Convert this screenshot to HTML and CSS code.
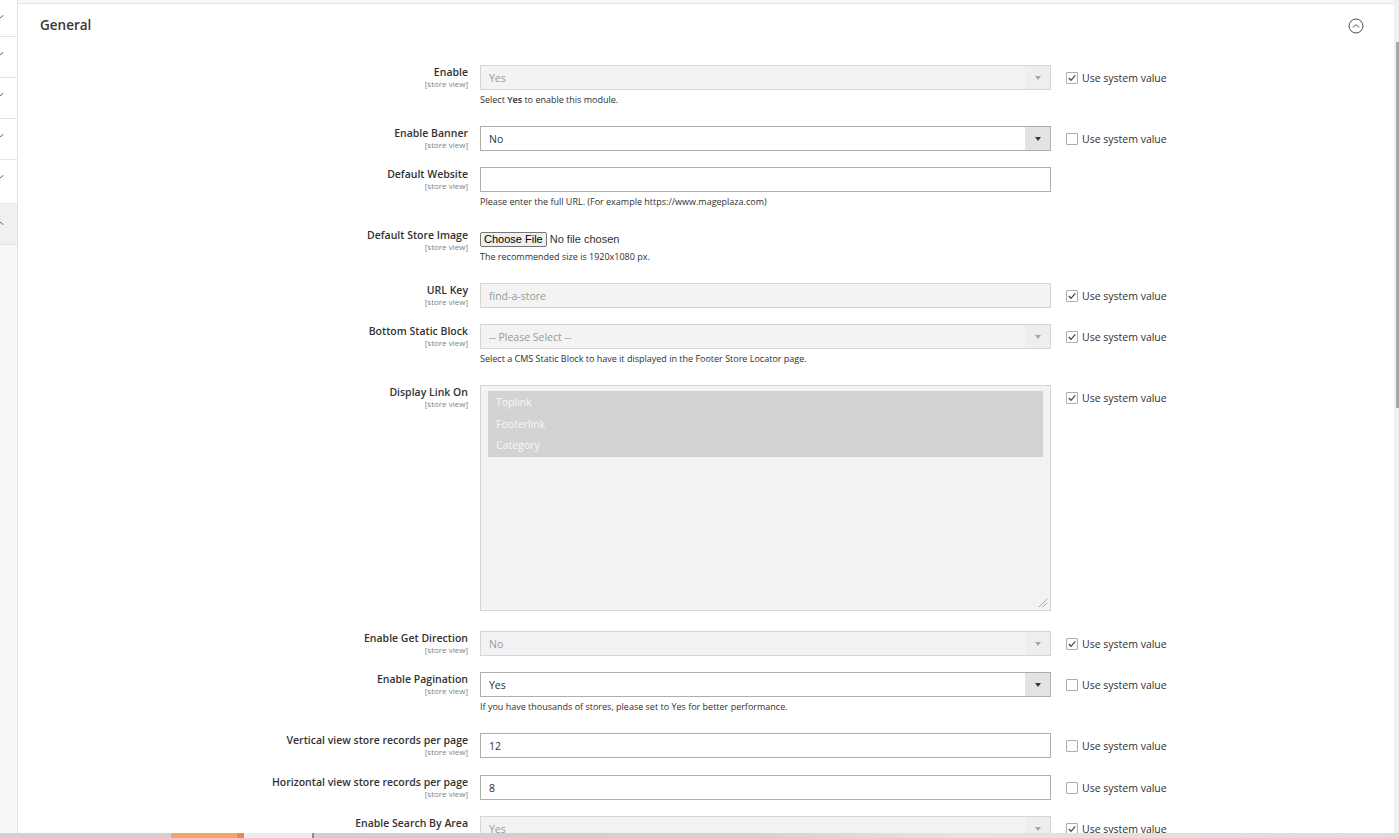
FILE: index.html
```html
<!DOCTYPE html>
<html lang="en">
  <head>
    <meta charset="UTF-8">
    <title>Store Locator - General</title>
    <link rel="stylesheet" href="styles.css">
  </head>
  <body>
    <div class="page">
      <!-- left tab list, scrolled out of view -->
      <aside class="sidebar">
        <div class="nav-item first"><svg class="chev" viewBox="0 0 8 5"><path d="M1 1 L4 4 L7 1"/></svg></div>
        <div class="nav-item"><svg class="chev" viewBox="0 0 8 5"><path d="M1 1 L4 4 L7 1"/></svg></div>
        <div class="nav-item"><svg class="chev" viewBox="0 0 8 5"><path d="M1 1 L4 4 L7 1"/></svg></div>
        <div class="nav-item"><svg class="chev" viewBox="0 0 8 5"><path d="M1 1 L4 4 L7 1"/></svg></div>
        <div class="nav-item tall"><svg class="chev" viewBox="0 0 8 5"><path d="M1 1 L4 4 L7 1"/></svg></div>
        <div class="nav-item active"><svg class="chev" viewBox="0 0 8 5"><path d="M1 4 L4 1 L7 4"/></svg></div>
      </aside>

      <main class="content">
        <div class="section-head">
          <h2>General</h2>
          <span class="collapse">
            <svg viewBox="0 0 16 16"><circle cx="8" cy="8" r="7"/><path d="M5 9.5 L8 6.5 L11 9.5"/></svg>
          </span>
        </div>

        <div class="form">
          <div class="field">
            <div class="label"><span class="label-text">Enable</span><span class="scope">[store view]</span></div>
            <div class="control">
              <div class="select disabled"><span>Yes</span><span class="arrow"></span></div>
              <div class="note">Select <b>Yes</b> to enable this module.</div>
            </div>
            <label class="use-default"><span class="checkbox checked"><svg viewBox="0 0 10 10"><path d="M1.8 5 L4 7.3 L8.3 2.3"/></svg></span>Use system value</label>
          </div>

          <div class="field">
            <div class="label"><span class="label-text">Enable Banner</span><span class="scope">[store view]</span></div>
            <div class="control">
              <div class="select"><span>No</span><span class="arrow"></span></div>
            </div>
            <label class="use-default"><span class="checkbox"></span>Use system value</label>
          </div>

          <div class="field">
            <div class="label"><span class="label-text">Default Website</span><span class="scope">[store view]</span></div>
            <div class="control">
              <input class="input" type="text" value="">
              <div class="note">Please enter the full URL. (For example https://www.mageplaza.com)</div>
            </div>
          </div>

          <div class="field">
            <div class="label"><span class="label-text">Default Store Image</span><span class="scope">[store view]</span></div>
            <div class="control">
              <div class="file-row"><span class="file-btn">Choose File</span><span class="file-name">No file chosen</span></div>
              <div class="note">The recommended size is 1920x1080 px.</div>
            </div>
          </div>

          <div class="field">
            <div class="label"><span class="label-text">URL Key</span><span class="scope">[store view]</span></div>
            <div class="control">
              <input class="input" type="text" value="find-a-store" disabled>
            </div>
            <label class="use-default"><span class="checkbox checked"><svg viewBox="0 0 10 10"><path d="M1.8 5 L4 7.3 L8.3 2.3"/></svg></span>Use system value</label>
          </div>

          <div class="field">
            <div class="label"><span class="label-text">Bottom Static Block</span><span class="scope">[store view]</span></div>
            <div class="control">
              <div class="select disabled"><span>-- Please Select --</span><span class="arrow"></span></div>
              <div class="note">Select a CMS Static Block to have it displayed in the Footer Store Locator page.</div>
            </div>
            <label class="use-default"><span class="checkbox checked"><svg viewBox="0 0 10 10"><path d="M1.8 5 L4 7.3 L8.3 2.3"/></svg></span>Use system value</label>
          </div>

          <div class="field tall-field">
            <div class="label"><span class="label-text">Display Link On</span><span class="scope">[store view]</span></div>
            <div class="control">
              <div class="multiselect">
                <div class="options">
                  <div class="option">Toplink</div>
                  <div class="option">Footerlink</div>
                  <div class="option">Category</div>
                </div>
                <svg class="grip" viewBox="0 0 12 12"><path d="M2 11 L11 2 M6 11 L11 6"/></svg>
              </div>
            </div>
            <label class="use-default"><span class="checkbox checked"><svg viewBox="0 0 10 10"><path d="M1.8 5 L4 7.3 L8.3 2.3"/></svg></span>Use system value</label>
          </div>

          <div class="field">
            <div class="label"><span class="label-text">Enable Get Direction</span><span class="scope">[store view]</span></div>
            <div class="control">
              <div class="select disabled"><span>No</span><span class="arrow"></span></div>
            </div>
            <label class="use-default"><span class="checkbox checked"><svg viewBox="0 0 10 10"><path d="M1.8 5 L4 7.3 L8.3 2.3"/></svg></span>Use system value</label>
          </div>

          <div class="field">
            <div class="label"><span class="label-text">Enable Pagination</span><span class="scope">[store view]</span></div>
            <div class="control">
              <div class="select"><span>Yes</span><span class="arrow"></span></div>
              <div class="note">If you have thousands of stores, please set to Yes for better performance.</div>
            </div>
            <label class="use-default"><span class="checkbox"></span>Use system value</label>
          </div>

          <div class="field spaced">
            <div class="label"><span class="label-text">Vertical view store records per page</span><span class="scope">[store view]</span></div>
            <div class="control">
              <input class="input" type="text" value="12">
            </div>
            <label class="use-default"><span class="checkbox"></span>Use system value</label>
          </div>

          <div class="field">
            <div class="label"><span class="label-text">Horizontal view store records per page</span><span class="scope">[store view]</span></div>
            <div class="control">
              <input class="input" type="text" value="8">
            </div>
            <label class="use-default"><span class="checkbox"></span>Use system value</label>
          </div>

          <div class="field">
            <div class="label"><span class="label-text">Enable Search By Area</span><span class="scope">[store view]</span></div>
            <div class="control">
              <div class="select disabled"><span>Yes</span><span class="arrow"></span></div>
            </div>
            <label class="use-default"><span class="checkbox checked"><svg viewBox="0 0 10 10"><path d="M1.8 5 L4 7.3 L8.3 2.3"/></svg></span>Use system value</label>
          </div>
        </div>
      </main>

      <div class="vscroll"><div class="thumb"></div></div>
    </div>

    <!-- strip of the window below, peeking in at the bottom -->
    <div class="bottom-strip">
      <span class="seg gray"></span>
      <span class="seg orange"></span>
      <span class="seg orange-dark"></span>
      <span class="seg light"></span>
      <span class="seg line"></span>
      <span class="seg rest"></span>
    </div>
  </body>
</html>
```

FILE: styles.css
```css
body {
  margin: 0;
  font-family: "Open Sans", "Noto Sans", sans-serif;
  color: #303030;
  background: #fff;
  height: 838px;
  overflow: hidden;
}

.page {
  display: flex;
  height: 838px;
}

/* left tabs */
.sidebar {
  width: 17px;
  flex: none;
  border-right: 1px solid #e3e3e3;
  background: #f8f8f8;
  overflow: hidden;
}

.nav-item {
  height: 40px;
  border-bottom: 1px solid #e3e3e3;
  background: #fff;
  position: relative;
}

.nav-item.first { height: 36px; }
.nav-item.tall { height: 43px; }
.nav-item.active { background: #f0f0f0; }

.chev {
  position: absolute;
  left: -3px;
  top: 14px;
  width: 7px;
  height: 5px;
  fill: none;
  stroke: #514943;
  stroke-width: 1.1;
}

.nav-item.active .chev { top: 17px; }

/* main area */
.content {
  flex: 1;
  border-top: 1px solid #e3e3e3;
  margin-top: 3px;
  box-shadow: 0 -3px 0 #f8f8f8;
}

.section-head {
  display: flex;
  justify-content: space-between;
  align-items: flex-start;
  padding: 11px 30px 0 22px;
  height: 21px;
}

.section-head h2 {
  margin: 0;
  font-size: 13.5px;
  line-height: 20px;
  font-weight: 600;
  color: #41362f;
}

.collapse {
  margin-top: 3px;
}

.collapse svg {
  display: block;
  width: 16px;
  height: 16px;
  fill: none;
  stroke: #514943;
  stroke-width: 1;
}

.form {
  padding-top: 29px;
}

.field {
  display: grid;
  grid-template-columns: 451px 570px auto;
  column-gap: 11px;
  align-items: start;
  margin-bottom: 16px;
}

.tall-field { margin-bottom: 20px; }
.field.spaced { margin-bottom: 17px; }

.label {
  text-align: right;
  padding-right: 1px;
}

.label-text {
  display: block;
  font-size: 10.5px;
  line-height: 14px;
  font-weight: 600;
  color: #333;
}

.scope {
  display: block;
  font-size: 8px;
  line-height: 10px;
  color: #808080;
}

.note {
  font-size: 9px;
  line-height: 12px;
  margin: 4px 0 4px;
  color: #303030;
}

.note b { font-weight: 600; }

/* inputs */
.input {
  display: block;
  box-sizing: border-box;
  width: 571px;
  height: 25px;
  margin: 0;
  padding: 0 8px;
  border: 1px solid #adadad;
  font-family: inherit;
  font-size: 10.5px;
  color: #303030;
  background: #fff;
  outline: none;
}

.input:disabled {
  background: #f3f3f3;
  border-color: #d6d6d6;
  color: #999;
}

.select {
  box-sizing: border-box;
  width: 571px;
  height: 25px;
  border: 1px solid #adadad;
  background: #fff;
  display: flex;
  align-items: center;
  justify-content: space-between;
  padding-left: 8px;
  font-size: 10.5px;
  color: #303030;
}

.select .arrow {
  width: 25px;
  height: 23px;
  background: #e3e3e3;
  position: relative;
}

.select .arrow::after {
  content: "";
  position: absolute;
  left: 10px;
  top: 10px;
  border-left: 3px solid transparent;
  border-right: 3px solid transparent;
  border-top: 4px solid #41362f;
}

.select.disabled {
  background: #f3f3f3;
  border-color: #d6d6d6;
  color: #999;
}

.select.disabled .arrow { background: #eeeeee; }
.select.disabled .arrow::after { border-top-color: #a6a6a6; }

/* file picker */
.file-row {
  height: 19px;
  padding-top: 4px;
  box-sizing: border-box;
  display: flex;
  align-items: flex-start;
  font-family: "Liberation Sans", Arial, sans-serif;
  font-size: 11px;
}

.file-btn {
  box-sizing: border-box;
  height: 15px;
  line-height: 13px;
  padding: 0 3px;
  border: 1px solid #767676;
  border-radius: 2px;
  background: #efefef;
  color: #000;
}

.file-name {
  margin-left: 3px;
  line-height: 15px;
  color: #303030;
}

/* multiselect */
.multiselect {
  position: relative;
  box-sizing: border-box;
  width: 571px;
  height: 226px;
  border: 1px solid #d6d6d6;
  background: #f3f3f3;
  padding: 5px 7px 0 7px;
}

.options {
  background: #d3d3d3;
  padding-top: 1px;
}

.option {
  padding-left: 8px;
  font-size: 10.5px;
  line-height: 21.5px;
  color: #f7f7f7;
}

.grip {
  position: absolute;
  right: 2px;
  bottom: 2px;
  width: 11px;
  height: 11px;
  fill: none;
  stroke: #9a9a9a;
  stroke-width: 1;
}

/* use system value */
.use-default {
  margin-left: 5px;
  height: 25px;
  display: flex;
  align-items: center;
  font-size: 10.5px;
  color: #303030;
}

.checkbox {
  box-sizing: border-box;
  width: 12px;
  height: 12px;
  border: 1px solid #adadad;
  border-radius: 1px;
  background: #fff;
  margin-right: 4px;
  display: flex;
  align-items: center;
  justify-content: center;
}

.checkbox svg {
  width: 10px;
  height: 10px;
  fill: none;
  stroke: #514943;
  stroke-width: 1.3;
}

/* right scrollbar */
.vscroll {
  width: 5px;
  flex: none;
  background: #f1f1f1;
  position: relative;
}

.vscroll .thumb {
  position: absolute;
  top: 42px;
  left: 2px;
  width: 3px;
  height: 366px;
  background: #a8a8a8;
}

/* bottom strip */
.bottom-strip {
  position: fixed;
  left: 0;
  right: 0;
  bottom: 0;
  height: 5px;
  display: flex;
}

.seg { display: block; height: 5px; }
.seg.gray { width: 171px; background: #d2d2d2; }
.seg.orange { width: 66px; background: #f3a66a; }
.seg.orange-dark { width: 7px; background: #e98b45; }
.seg.light { width: 68px; background: #ebebeb; }
.seg.line { width: 2px; background: #8a8a8a; }
.seg.rest { flex: 1; background: linear-gradient(to right, #cfcfcf 0%, #d8d0d0 40%, #e8e2e2 60%, #dcdcdc 100%); }
```
